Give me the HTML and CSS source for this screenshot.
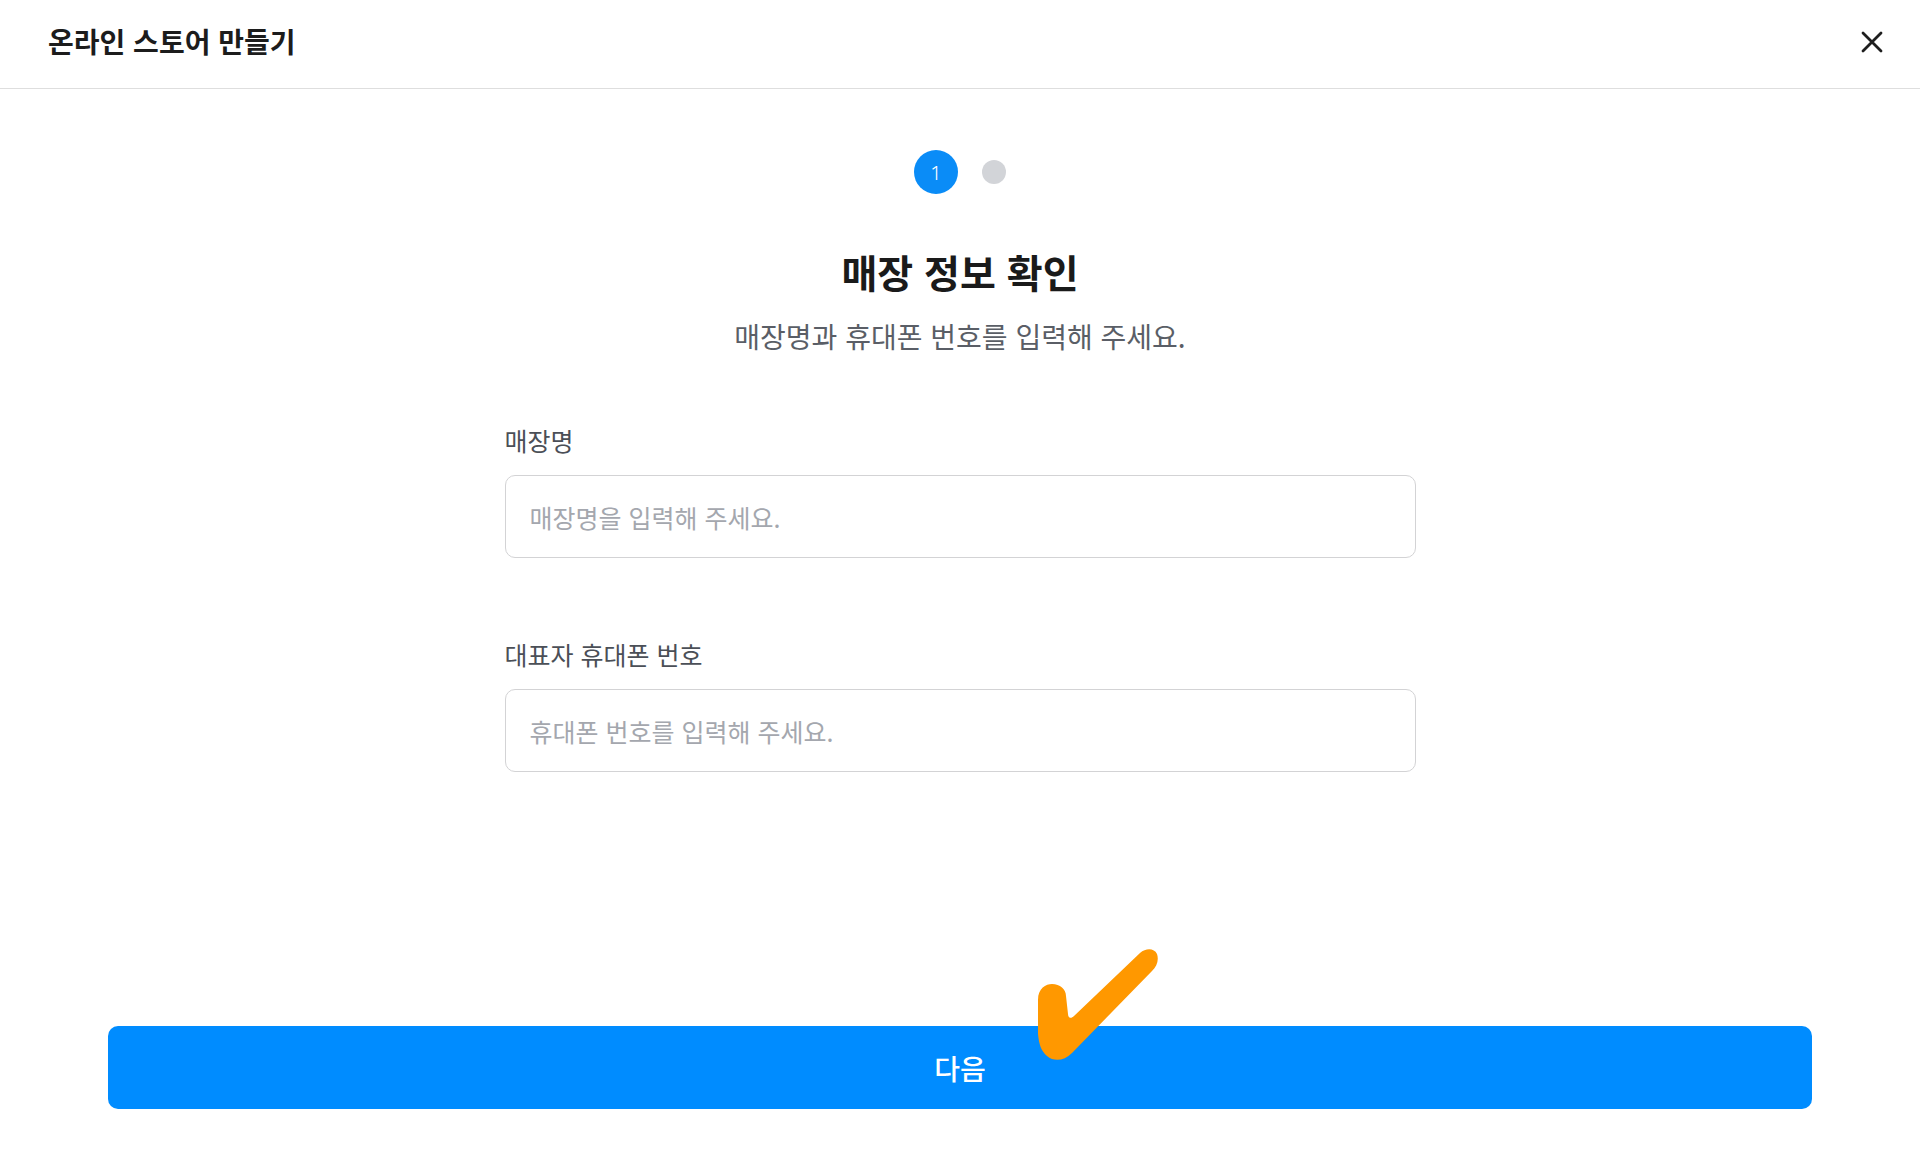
FILE: index.html
```html
<!DOCTYPE html>
<html lang="ko">
<head>
<meta charset="utf-8">
<title>온라인 스토어 만들기</title>
<link rel="stylesheet" href="styles.css">
</head>
<body>
<div class="page">
  <header class="topbar">
    <h1 class="topbar-title">온라인 스토어 만들기</h1>
    <button class="close-btn" aria-label="닫기">
      <svg width="24" height="24" viewBox="0 0 24 24"><path d="M3 3 L21 21 M21 3 L3 21" stroke="#1e1e1e" stroke-width="2.8" stroke-linecap="round" fill="none"/></svg>
    </button>
  </header>

  <main class="content">
    <div class="steps">
      <span class="step step-active">1</span>
      <span class="step step-dot"></span>
    </div>
    <h2 class="title">매장 정보 확인</h2>
    <p class="subtitle">매장명과 휴대폰 번호를 입력해 주세요.</p>

    <form class="form">
      <label class="field">
        <span class="field-label">매장명</span>
        <input class="field-input" type="text" placeholder="매장명을 입력해 주세요.">
      </label>
      <label class="field field-second">
        <span class="field-label">대표자 휴대폰 번호</span>
        <input class="field-input" type="tel" placeholder="휴대폰 번호를 입력해 주세요.">
      </label>
    </form>
  </main>

  <footer class="footer">
    <button class="next-btn" type="button">다음</button>
  </footer>
</div>

<svg class="tick" width="140" height="130" viewBox="1030 945 140 130">
  <path d="M1038 1000 C1038 988 1046 984 1052 984 C1060 984 1066 989 1066 996 L1068 1014 C1068 1018 1071 1019 1074 1016 L1140 953 C1146 948 1154 948 1157 954 C1159 960 1157 966 1152 971 L1072 1053 C1064 1061 1054 1062 1047 1056 C1041 1051 1039 1044 1038 1034 Z" fill="#ff9800"/>
</svg>
</body>
</html>
```

FILE: styles.css
```css
* { box-sizing: border-box; }

html, body {
  margin: 0;
  padding: 0;
  background: #ffffff;
}

body {
  font-family: "Noto Sans CJK KR", "Noto Sans", sans-serif;
  color: #1e1e1e;
  position: relative;
}

.page {
  display: flex;
  flex-direction: column;
  height: 100vh;
}

.topbar {
  height: 89px;
  flex: none;
  display: flex;
  align-items: center;
  justify-content: space-between;
  padding: 0 36px 6px 48px;
  border-bottom: 1px solid #dedede;
}

.topbar-title {
  margin: 0;
  font-size: 28px;
  line-height: 36px;
  font-weight: 700;
  letter-spacing: 0;
  color: #1c1c1c;
}

.close-btn {
  border: 0;
  background: none;
  padding: 0;
  width: 24px;
  height: 24px;
  margin-top: 2px;
  cursor: pointer;
  display: flex;
}

.content {
  flex: 1;
  display: flex;
  flex-direction: column;
  align-items: center;
}

.steps {
  margin-top: 61px;
  display: flex;
  align-items: center;
  gap: 24px;
  height: 44px;
}

.step {
  border-radius: 50%;
  display: flex;
  align-items: center;
  justify-content: center;
}

.step-active {
  width: 44px;
  height: 44px;
  background: #0a8cf7;
  color: #ffffff;
  font-family: "Noto Sans", sans-serif;
  font-size: 20px;
  font-weight: 300;
}

.step-dot {
  width: 24px;
  height: 24px;
  background: #d2d4d8;
}

.title {
  margin: 52px 0 0;
  font-size: 39px;
  line-height: 50px;
  font-weight: 700;
  letter-spacing: 0;
  color: #1a1a1a;
}

.subtitle {
  margin: 20px 0 0;
  font-size: 28px;
  line-height: 40px;
  font-weight: 400;
  letter-spacing: 0;
  color: #5a5e66;
}

.form {
  width: 911px;
  margin-top: 68px;
  display: flex;
  flex-direction: column;
}

.field {
  display: flex;
  flex-direction: column;
  gap: 19px;
}

.field-second {
  margin-top: 80px;
}

.field-label {
  font-size: 25px;
  line-height: 32px;
  letter-spacing: 0;
  color: #4b4f57;
}

.field-input {
  height: 83px;
  width: 100%;
  border: 1.5px solid #d3d3d5;
  border-radius: 10px;
  padding: 0 24px;
  font-family: "Noto Sans CJK KR", "Noto Sans", sans-serif;
  font-size: 25px;
  letter-spacing: 0;
  color: #1e1e1e;
  outline: none;
  background: #ffffff;
}

.field-input::placeholder {
  color: #a4a7ae;
}

.footer {
  flex: none;
  padding: 0 108px 49px;
}

.next-btn {
  width: 100%;
  height: 83px;
  border: 0;
  border-radius: 10px;
  background: #008cff;
  color: #ffffff;
  font-family: "Noto Sans CJK KR", "Noto Sans", sans-serif;
  font-size: 28px;
  font-weight: 500;
  letter-spacing: 0;
  cursor: pointer;
}

.tick {
  position: absolute;
  left: 1030px;
  top: 945px;
  pointer-events: none;
}
```
